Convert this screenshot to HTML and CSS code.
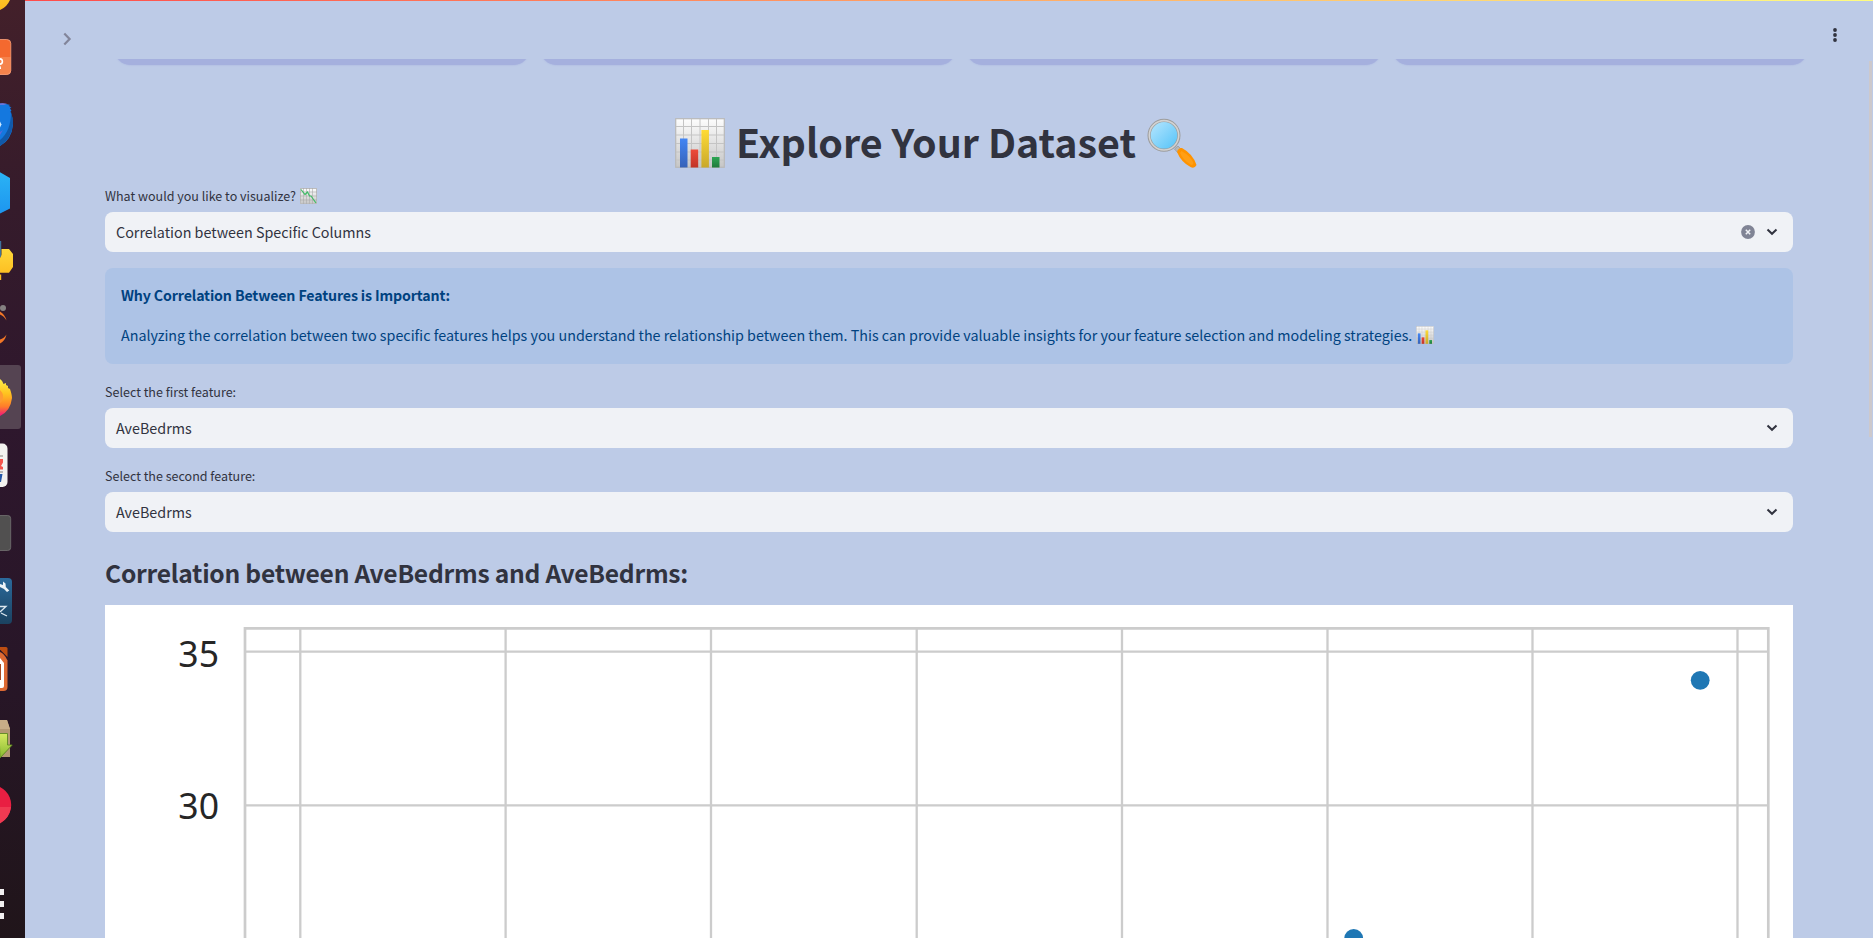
FILE: index.html
```html
<!DOCTYPE html>
<html lang="en">
<head>
<meta charset="utf-8">
<title>Explore Your Dataset</title>
<link rel="stylesheet" href="styles.css">
</head>
<body>
<svg class="defs" width="0" height="0" aria-hidden="true">
  <defs>
    <linearGradient id="paper" x1="0" y1="0" x2="0" y2="1"><stop offset="0" stop-color="#fdfdfd"/><stop offset="1" stop-color="#c6c6c6"/></linearGradient>
    <linearGradient id="blue" x1="0" y1="0" x2="0" y2="1"><stop offset="0" stop-color="#4285f4"/><stop offset="1" stop-color="#3662b8"/></linearGradient>
    <linearGradient id="red" x1="0" y1="0" x2="0" y2="1"><stop offset="0" stop-color="#ee4a39"/><stop offset="1" stop-color="#c03428"/></linearGradient>
    <linearGradient id="yellow" x1="0" y1="0" x2="0" y2="1"><stop offset="0" stop-color="#ffdb35"/><stop offset="1" stop-color="#c8a82a"/></linearGradient>
    <linearGradient id="green" x1="0" y1="0" x2="0" y2="1"><stop offset="0" stop-color="#2da653"/><stop offset="1" stop-color="#1f7a3b"/></linearGradient>
    <linearGradient id="lens" x1="0" y1="0" x2="1" y2="1"><stop offset=".2" stop-color="#a6e0fd"/><stop offset="1" stop-color="#4fc1f8"/></linearGradient>
    <symbol id="bars" viewBox="0 0 50 50">
      <rect x=".7" y=".7" width="48.6" height="48.6" fill="url(#paper)" stroke="#b9b9b9" stroke-width="1.2"/>
      <path d="M8.5 1v48M16.5 1v48M25 1v48M33.500 1v48M41.500 1v48M1 8.500h48M1 17h48M1 25.500h48M1 34h48M1 42h48" stroke="#c4c4c4" stroke-width="1" fill="none"/>
      <rect x="5" y="20.500" width="7.500" height="29" fill="url(#blue)"/>
      <rect x="15.700" y="31.500" width="7.500" height="18" fill="url(#red)"/>
      <rect x="26.400" y="12" width="7.500" height="37.500" fill="url(#yellow)"/>
      <rect x="37" y="39" width="7.500" height="10.500" fill="url(#green)"/>
    </symbol>
  </defs>
</svg>
<div class="screen">
  <aside class="dock">
    <svg width="25" height="938" viewBox="0 0 25 938">
      <defs>
        <linearGradient id="sun" x1="0" y1="0" x2="0" y2="1"><stop offset="0" stop-color="#ffd83a"/><stop offset="1" stop-color="#fcb81c"/></linearGradient>
        <linearGradient id="hex" x1="0" y1="0" x2="0" y2="1"><stop offset="0" stop-color="#2bb4f5"/><stop offset="1" stop-color="#1d95ef"/></linearGradient>
        <linearGradient id="fox" x1="0" y1="0" x2="0" y2="1"><stop offset="0" stop-color="#fff04a"/><stop offset=".4" stop-color="#ffc21f"/><stop offset=".75" stop-color="#ff7b2b"/><stop offset="1" stop-color="#f1127e"/></linearGradient>
        <linearGradient id="tool" x1="0" y1="0" x2="0" y2="1"><stop offset="0" stop-color="#2b6a9c"/><stop offset="1" stop-color="#1b4260"/></linearGradient>
        <linearGradient id="arrow" x1="0" y1="0" x2="0" y2="1"><stop offset="0" stop-color="#d6ea62"/><stop offset="1" stop-color="#86b830"/></linearGradient>
      </defs>
      <circle cx="-6" cy="-6" r="17" fill="url(#sun)"/>
      <rect x="-24" y="39.500" width="34.800" height="35" rx="4" fill="#f4692f"/>
      <path d="M0 57h10.500v14a3.500 3.500 0 0 1-3.500 3.500H0z" fill="#f5834c"/>
      <rect x="-24" y="39.500" width="34.800" height="35" rx="4" fill="none" stroke="#f9a27c" stroke-width=".8"/>
      <circle cx="-.2" cy="61.500" r="2.600" fill="none" stroke="#fff" stroke-width="1.600"/>
      <path d="M-1 65.500q1.500 1 1.500 3.500" fill="none" stroke="#fff" stroke-width="1.200"/>
      <path d="M0 103.500q5-.5 10.500 1.500l-2 .8 3 1.700-1.500.5 1.500 3-1 .3Q13 118 13 125 11.500 140 0 146z" fill="#1478df"/>
      <path d="M11 112q2 5 2 12-1.500 15-13 22v-6q11-9 11-28z" fill="#1159a9"/>
      <path d="M0 103.500q4-.4 7 .3l-3 1H0z" fill="#8279df"/>
      <path d="M0 121.500l1.500 3L0 127.500z" fill="#cfe9ff"/><path d="M0 132l3-2-3 5z" fill="#5b67dc"/>
      <path d="M-2 171l12 7v30.500l-12 6z" fill="url(#hex)"/>
      <path d="M0 241h1.200v15L0 258z" fill="#3e719d"/>
      <path d="M1.500 249h7.500l4 5v13l-4 5.800H0V258q1.500-2 1.500-4zM0 274.500h1.200v5.500H0z" fill="url(#sun)"/>
      <circle cx="3" cy="308" r="3" fill="#858181"/>
      <path d="M0 311.500q5 3 6.500 9Q4 316 0 314.500zM0 339.500q4-1 6.500-5Q5 341 0 343.500z" fill="#f37726"/>
      <path d="M0 365h18a3 3 0 0 1 3 3v58a3 3 0 0 1-3 3H0z" fill="#554452"/>
      <path d="M0 379q3 2 3.500 5l2.500-1v2l2 1v2l2 1Q12 395 12 398 10.500 411 0 416z" fill="url(#fox)"/>
      <path d="M0 390q5 5 2 11l-2 2z" fill="#ff9a32"/>
      <rect x="-20" y="443.500" width="27.500" height="43.500" rx="5" fill="#f3f2ef"/>
      <path d="M0 455h3v2H0zM0 471h3v2H0z" fill="#bdbab5"/><path d="M0 459h3v3.500L1 466l2 1v2.500H0z" fill="#f6554c"/><path d="M0 474h2.500L1 482H0z" fill="#2458a8"/>
      <rect x="-20" y="515.500" width="30.700" height="35" rx="3" fill="#515050" stroke="#747272" stroke-width=".8"/>
      <rect x="-20" y="578" width="32" height="46" rx="4" fill="url(#tool)"/>
      <path d="M3 581.500v3.500l-3-1v3l4 2 3 3 2.300-1.500-3.500-3.500-.3-3.500z" fill="#edf3f8"/>
      <path d="M0 606.500h6L0 612M1 613l6 3" stroke="#dce7ef" stroke-width="1.300" fill="none"/>
      <path d="M0 647h6q1.500 0 1.500 1.500V657L0 649.500z" fill="#bd4d12"/>
      <path d="M0 652q4 1 7.500 8.500V687q0 4-4 4H0z" fill="#dc6933"/>
      <path d="M0 658l4 5v23q0 2-2 2H0z" fill="#fff"/><path d="M0 664h1v16H0z" fill="#a74a22"/>
      <path d="M0 720h7l3 9v28H0z" fill="#b39873"/><path d="M0 720h7l3 9H0z" fill="#c7ad87"/>
      <path d="M-1 733.500h8.500V745h4.700L0 758z" fill="url(#arrow)" stroke="#5d8722" stroke-width=".9"/>
      <circle cx="-9" cy="805" r="20.200" fill="#e91f42"/><path d="M0 807h11q-1.500 11-11 16.500z" fill="#f03a52"/>
      <path d="M0 889h4v6H0zM0 901h4v6H0zM0 913h4v6H0z" fill="#f2f0f1"/>
    </svg>
  </aside>

  <main class="app">
    <header class="toolbar">
      <svg class="expand" width="10" height="14" viewBox="0 0 10 14"><path d="M2.300 1.500L7.600 7l-5.300 5.500" fill="none" stroke="#82859a" stroke-width="2.200"/></svg>
      <svg class="kebab" width="6" height="16" viewBox="0 0 6 16" fill="#31333f"><circle cx="3" cy="3" r="1.900"/><circle cx="3" cy="8" r="1.900"/><circle cx="3" cy="13" r="1.900"/></svg>
    </header>
    <div class="cards"><div class="card"></div><div class="card"></div><div class="card"></div><div class="card"></div></div>

    <div class="content">
      <h1 class="title">
        <svg width="50" height="50"><use href="#bars"/></svg>
        <span class="title-text">Explore Your Dataset</span>
        <svg width="50" height="50" viewBox="0 0 50 50">
          <path d="M27.500 31l3.500-3 3 3-3.500 3.500z" fill="#b5b5b5" stroke="#969696" stroke-width=".7"/>
          <path d="M30 34q1.500-4.500 5-4 11 6 14.500 17-2 4-6 2Q34 44 30 34z" fill="#ff9300"/>
          <path d="M34.500 33q9 5 12 12-1 3-3 1.500Q36 42 33 35z" fill="#ff9f16"/>
          <circle cx="17" cy="17.300" r="14.900" fill="url(#lens)" stroke="#9c9c9c" stroke-width="3.200"/>
          <circle cx="17" cy="17.300" r="14.700" fill="none" stroke="#d2d2d2" stroke-width="1.600"/>
        </svg>
      </h1>

      <div class="field">
        <label class="label">What would you like to visualize?
          <svg class="label-icon" width="17" height="16" viewBox="0 0 17 16"><rect x=".5" y=".5" width="16" height="15" fill="url(#paper)" stroke="#bcbcbc"/><path d="M3.500 0v16M6.500 0v16M9.500 0v16M12.500 0v16M0 4h17M0 8h17M0 12h17" stroke="#a9aaa9" stroke-width=".6"/><path d="M1 1.500l4 5L7.500 4l2 4h1.500l5 7" fill="none" stroke="#3dbb64" stroke-width="1.200"/></svg>
        </label>
        <div class="select">
          <span class="value">Correlation between Specific Columns</span>
          <svg class="clear" width="14" height="14" viewBox="0 0 14 14"><circle cx="7" cy="7" r="6.900" fill="#808495"/><path d="M4.800 4.800l4.400 4.400M9.200 4.800L4.800 9.200" stroke="#f0f2f6" stroke-width="1.500"/></svg>
          <svg class="chevron" width="12" height="8" viewBox="0 0 12 8"><path d="M1.500 1.500L6 5.800l4.500-4.300" fill="none" stroke="#31333f" stroke-width="2"/></svg>
        </div>
      </div>

      <div class="info">
        <p class="info-line info-strong"><strong>Why Correlation Between Features is Important:</strong></p>
        <p class="info-line info-body"><span>Analyzing the correlation between two specific features helps you understand the relationship between them. This can provide valuable insights for your feature selection and modeling strategies.</span> <svg class="info-icon" width="18" height="18"><use href="#bars"/></svg></p>
      </div>

      <div class="field">
        <label class="label">Select the first feature:</label>
        <div class="select"><span class="value">AveBedrms</span>
          <svg class="chevron" width="12" height="8" viewBox="0 0 12 8"><path d="M1.500 1.500L6 5.800l4.500-4.300" fill="none" stroke="#31333f" stroke-width="2"/></svg></div>
      </div>
      <div class="field second">
        <label class="label">Select the second feature:</label>
        <div class="select"><span class="value">AveBedrms</span>
          <svg class="chevron" width="12" height="8" viewBox="0 0 12 8"><path d="M1.500 1.500L6 5.800l4.500-4.300" fill="none" stroke="#31333f" stroke-width="2"/></svg></div>
      </div>

      <h3 class="subtitle"><span>Correlation between AveBedrms and AveBedrms:</span></h3>

      <svg class="chart" width="1688" height="333" viewBox="0 0 1688 333">
        <rect width="1688" height="333" fill="#fff"/>
        <path d="M195.300 23.300V333M400.600 23.300V333M606 23.300V333M811.700 23.300V333M1017 23.300V333M1222.500 23.300V333M1427.500 23.300V333M1632.500 23.300V333M140 46.700h1523M140 200.300h1523" fill="none" stroke="#ccc" stroke-width="2.300"/>
        <path d="M140 333V23.300h1523.300V333" fill="none" stroke="#ccc" stroke-width="2.700"/>
        <circle cx="1595.200" cy="75.300" r="9.400" fill="#1f77b4"/>
        <circle cx="1248.700" cy="333.300" r="9.400" fill="#1f77b4"/>
        <text class="tick" x="114" y="61.500">35</text>
        <text class="tick" x="114" y="213.500">30</text>
      </svg>
    </div>
    <div class="scrollbar"></div>
  </main>
</div>
</body>
</html>
```
FILE: styles.css
```css
* { box-sizing: border-box; }
body {
  margin: 0;
  overflow: hidden;
  color: #31333f;
  background: #bdcbe7;
  font-family: "Noto Sans CJK SC", "Noto Sans", sans-serif;
}
svg { display: block; flex: none; }
.defs { position: absolute; }
.screen { display: flex; width: 1873px; height: 938px; overflow: hidden; }
.dock {
  flex: none;
  width: 25px;
  background: linear-gradient(180deg, #43202a 0, #351b2b 22%, #2e172d 45%, #281628 70%, #20151a 100%);
}
.app { position: relative; flex: 1; display: flex; flex-direction: column; }
.toolbar {
  display: flex;
  justify-content: space-between;
  height: 59px;
  padding: 0 35px 0 37px;
}
.toolbar::before {
  content: "";
  position: absolute;
  inset: 0 0 auto;
  height: 1px;
  background: linear-gradient(90deg, #ff4b4b, #fffd80);
}
.expand { margin-top: 32px; }
.kebab { margin-top: 27px; }
.cards {
  display: flex;
  align-items: flex-end;
  gap: 12px;
  height: 11px;
  padding: 0 0 5px 90px;
  overflow: hidden;
}
.card {
  flex: none;
  width: 414px;
  height: 60px;
  border-radius: 15px;
  background: #a5b0de;
  box-shadow: 0 0 2px #a5b0de;
}
.content { width: 1688px; margin-left: 80px; }
.title {
  display: flex;
  justify-content: center;
  align-items: center;
  gap: 11px;
  height: 50px;
  margin: 48px 0 0;
  padding-right: 26px;
  font-size: 39.400px;
  line-height: 46px;
  white-space: nowrap;
}
.title-text { padding-bottom: 4px; }
.field { display: flex; flex-direction: column; }
.label {
  display: flex;
  align-items: center;
  gap: 4px;
  height: 24px;
  padding-bottom: 8px;
  font-size: 12.530px;
  line-height: 16px;
}
.title + .field { margin-top: 20px; }
.select {
  display: flex;
  align-items: center;
  height: 40px;
  padding: 0 15px 0 11px;
  border-radius: 8px;
  background: #f0f2f6;
  font-size: 14.330px;
  line-height: 24px;
}
.value { flex: 1; }
.clear { margin-right: 11px; }
.info {
  height: 96px;
  margin: 16px 0 20px;
  padding: 15px 16px 17px;
  border-radius: 8px;
  background: #adc3e6;
  color: #004280;
  font-size: 14.320px;
}
.info-line { display: flex; align-items: center; gap: 4px; height: 24px; margin: 0 0 16px; line-height: 24px; white-space: nowrap; }
.info-strong { font-size: 14.200px; letter-spacing: -.140px; }
.second { margin-top: 20px; }
.subtitle { height: 73px; margin: 0; padding-top: 21px; font-size: 24.600px; font-weight: 600; line-height: 38px; letter-spacing: -.250px; white-space: nowrap; }
.tick { font: 35.600px "Noto Sans", sans-serif; fill: #262626; text-anchor: end; }
.scrollbar { position: absolute; top: 61px; right: 1px; width: 3px; height: 376px; background: #cdc9cc; }
```
